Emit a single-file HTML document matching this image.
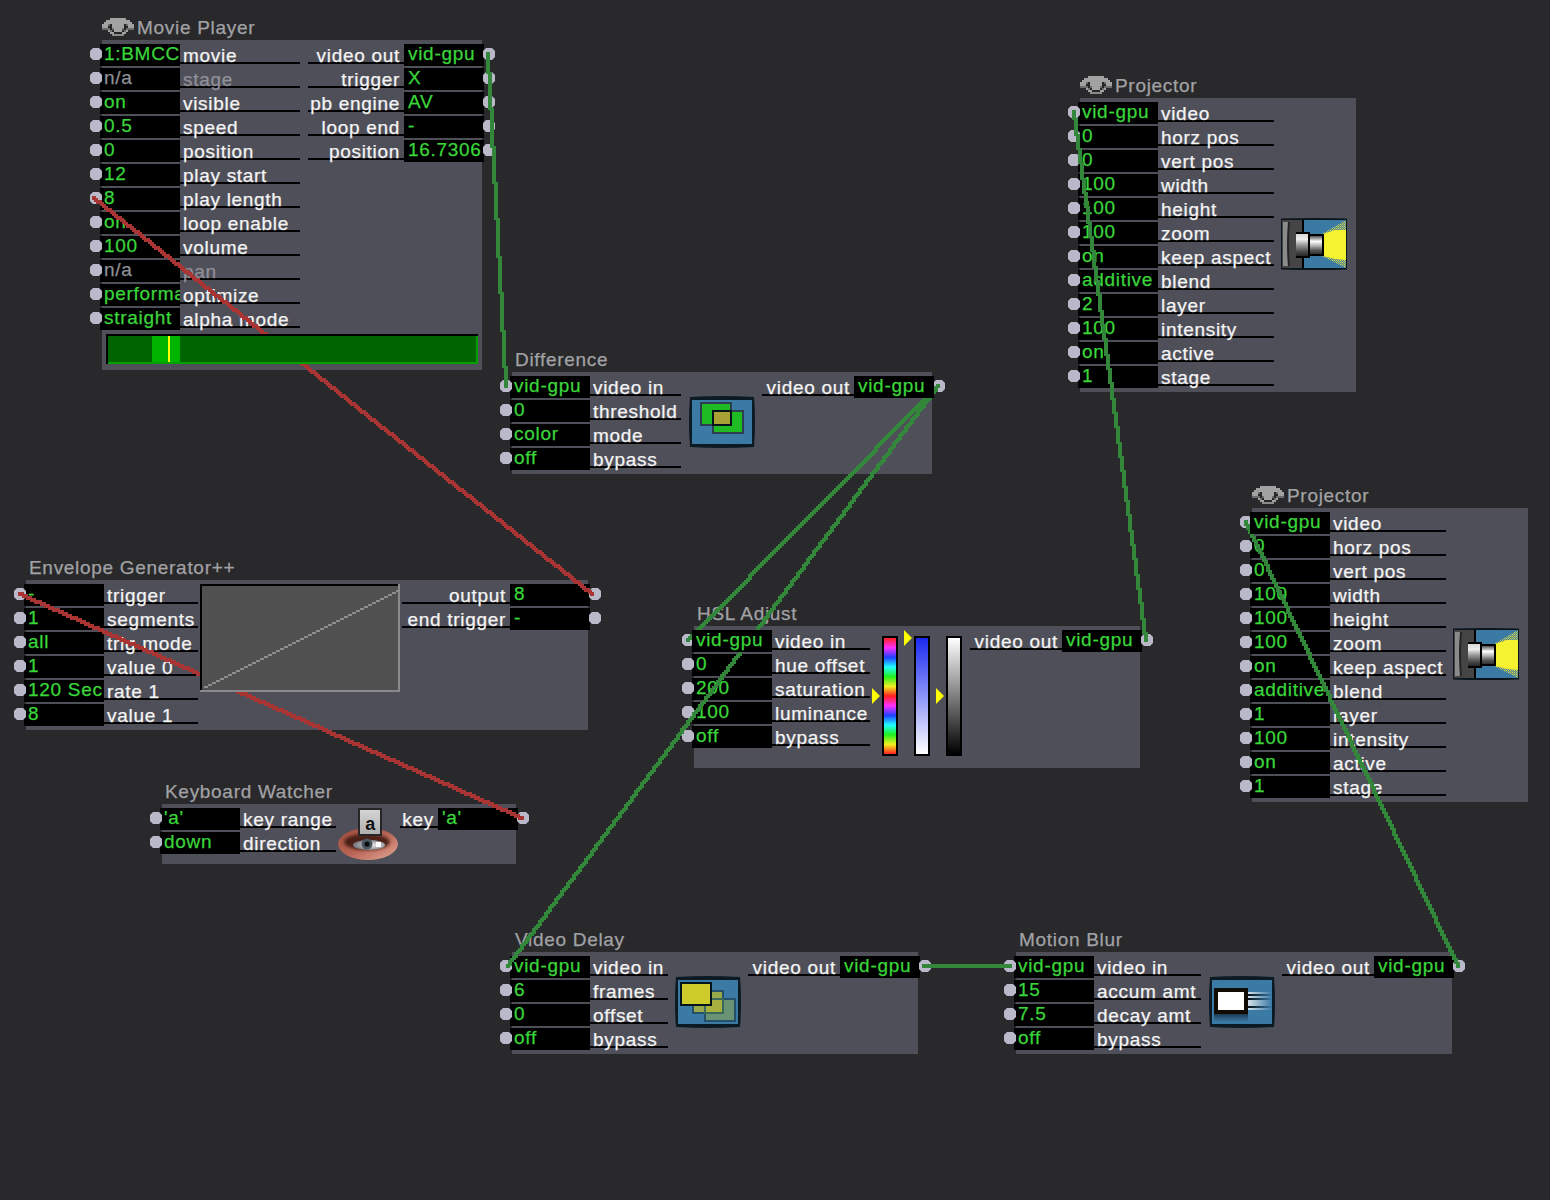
<!DOCTYPE html>
<html><head><meta charset="utf-8"><style>
html,body{margin:0;padding:0}
body{width:1550px;height:1200px;background:#29292b;position:relative;overflow:hidden;font-family:"Liberation Sans",sans-serif;font-size:19px;letter-spacing:0.7px;-webkit-text-stroke:0.25px currentColor}
.t{position:absolute;white-space:nowrap;line-height:22px;height:22px}
.f{position:absolute;background:#000;height:22px;overflow:hidden}
.v{position:absolute;left:4px;top:-1px;white-space:nowrap;line-height:22px}
.p{position:absolute;width:12px;height:12px;background:#b9b9c9;clip-path:polygon(3px 0,9px 0,12px 3px,12px 9px,9px 12px,3px 12px,0 9px,0 3px)}
svg{display:block}
</style></head><body>

<div style="position:absolute;left:102px;top:18px;width:32px;height:18px"><svg width="32" height="18" viewBox="0 0 32 18" shape-rendering="crispEdges"><rect x="8" y="0" width="16" height="2" fill="#a2a2a2"/><rect x="4" y="2" width="24" height="2" fill="#a2a2a2"/><rect x="2" y="4" width="28" height="2" fill="#a2a2a2"/><rect x="0" y="6" width="32" height="2" fill="#a2a2a2"/><rect x="6" y="6" width="2" height="2" fill="#6c6c6c"/><rect x="8" y="6" width="2" height="2" fill="#262626"/><rect x="22" y="6" width="2" height="2" fill="#262626"/><rect x="24" y="6" width="2" height="2" fill="#6c6c6c"/><rect x="0" y="8" width="32" height="2" fill="#a2a2a2"/><rect x="6" y="8" width="4" height="2" fill="#262626"/><rect x="22" y="8" width="4" height="2" fill="#262626"/><rect x="0" y="10" width="32" height="2" fill="#6c6c6c"/><rect x="8" y="10" width="2" height="2" fill="#262626"/><rect x="12" y="10" width="8" height="2" fill="#a2a2a2"/><rect x="22" y="10" width="2" height="2" fill="#262626"/><rect x="6" y="12" width="20" height="2" fill="#a2a2a2"/><rect x="8" y="12" width="2" height="2" fill="#6c6c6c"/><rect x="10" y="12" width="2" height="2" fill="#262626"/><rect x="20" y="12" width="2" height="2" fill="#262626"/><rect x="22" y="12" width="2" height="2" fill="#6c6c6c"/><rect x="8" y="14" width="16" height="2" fill="#a2a2a2"/><rect x="12" y="14" width="8" height="2" fill="#262626"/><rect x="10" y="16" width="12" height="2" fill="#8a8a8a"/></svg></div>
<div class="t" style="left:137px;top:17px;color:#a2a2a6;">Movie Player</div>
<div style="position:absolute;left:102px;top:40px;width:380px;height:330px;background:#4f4f59;"></div>
<div style="position:absolute;left:180px;top:62px;width:120px;height:2px;background:#000;"></div>
<div class="f" style="left:100px;top:44px;width:80px"><div class="v" style="color:#3ad63a">1:BMCC2</div></div>
<div class="t" style="left:183px;top:45px;color:#f4f4f4;">movie</div>
<div class="p" style="left:90px;top:48px"></div>
<div style="position:absolute;left:180px;top:86px;width:120px;height:2px;background:#000;"></div>
<div class="f" style="left:100px;top:68px;width:80px"><div class="v" style="color:#909098">n/a</div></div>
<div class="t" style="left:183px;top:69px;color:#909098;">stage</div>
<div class="p" style="left:90px;top:72px"></div>
<div style="position:absolute;left:180px;top:110px;width:120px;height:2px;background:#000;"></div>
<div class="f" style="left:100px;top:92px;width:80px"><div class="v" style="color:#3ad63a">on</div></div>
<div class="t" style="left:183px;top:93px;color:#f4f4f4;">visible</div>
<div class="p" style="left:90px;top:96px"></div>
<div style="position:absolute;left:180px;top:134px;width:120px;height:2px;background:#000;"></div>
<div class="f" style="left:100px;top:116px;width:80px"><div class="v" style="color:#3ad63a">0.5</div></div>
<div class="t" style="left:183px;top:117px;color:#f4f4f4;">speed</div>
<div class="p" style="left:90px;top:120px"></div>
<div style="position:absolute;left:180px;top:158px;width:120px;height:2px;background:#000;"></div>
<div class="f" style="left:100px;top:140px;width:80px"><div class="v" style="color:#3ad63a">0</div></div>
<div class="t" style="left:183px;top:141px;color:#f4f4f4;">position</div>
<div class="p" style="left:90px;top:144px"></div>
<div style="position:absolute;left:180px;top:182px;width:120px;height:2px;background:#000;"></div>
<div class="f" style="left:100px;top:164px;width:80px"><div class="v" style="color:#3ad63a">12</div></div>
<div class="t" style="left:183px;top:165px;color:#f4f4f4;">play start</div>
<div class="p" style="left:90px;top:168px"></div>
<div style="position:absolute;left:180px;top:206px;width:120px;height:2px;background:#000;"></div>
<div class="f" style="left:100px;top:188px;width:80px"><div class="v" style="color:#3ad63a">8</div></div>
<div class="t" style="left:183px;top:189px;color:#f4f4f4;">play length</div>
<div class="p" style="left:90px;top:192px"></div>
<div style="position:absolute;left:180px;top:230px;width:120px;height:2px;background:#000;"></div>
<div class="f" style="left:100px;top:212px;width:80px"><div class="v" style="color:#3ad63a">on</div></div>
<div class="t" style="left:183px;top:213px;color:#f4f4f4;">loop enable</div>
<div class="p" style="left:90px;top:216px"></div>
<div style="position:absolute;left:180px;top:254px;width:120px;height:2px;background:#000;"></div>
<div class="f" style="left:100px;top:236px;width:80px"><div class="v" style="color:#3ad63a">100</div></div>
<div class="t" style="left:183px;top:237px;color:#f4f4f4;">volume</div>
<div class="p" style="left:90px;top:240px"></div>
<div style="position:absolute;left:180px;top:278px;width:120px;height:2px;background:#000;"></div>
<div class="f" style="left:100px;top:260px;width:80px"><div class="v" style="color:#909098">n/a</div></div>
<div class="t" style="left:183px;top:261px;color:#909098;">pan</div>
<div class="p" style="left:90px;top:264px"></div>
<div style="position:absolute;left:180px;top:302px;width:120px;height:2px;background:#000;"></div>
<div class="f" style="left:100px;top:284px;width:80px"><div class="v" style="color:#3ad63a">performance</div></div>
<div class="t" style="left:183px;top:285px;color:#f4f4f4;">optimize</div>
<div class="p" style="left:90px;top:288px"></div>
<div style="position:absolute;left:180px;top:326px;width:120px;height:2px;background:#000;"></div>
<div class="f" style="left:100px;top:308px;width:80px"><div class="v" style="color:#3ad63a">straight</div></div>
<div class="t" style="left:183px;top:309px;color:#f4f4f4;">alpha mode</div>
<div class="p" style="left:90px;top:312px"></div>
<div style="position:absolute;left:308px;top:62px;width:96px;height:2px;background:#000;"></div>
<div class="f" style="left:404px;top:44px;width:80px"><div class="v" style="color:#3ad63a">vid-gpu</div></div>
<div class="t" style="right:1150px;top:45px;color:#f4f4f4;text-align:right;">video out</div>
<div class="p" style="left:483px;top:48px"></div>
<div style="position:absolute;left:308px;top:86px;width:96px;height:2px;background:#000;"></div>
<div class="f" style="left:404px;top:68px;width:80px"><div class="v" style="color:#3ad63a">X</div></div>
<div class="t" style="right:1150px;top:69px;color:#f4f4f4;text-align:right;">trigger</div>
<div class="p" style="left:483px;top:72px"></div>
<div style="position:absolute;left:308px;top:110px;width:96px;height:2px;background:#000;"></div>
<div class="f" style="left:404px;top:92px;width:80px"><div class="v" style="color:#3ad63a">AV</div></div>
<div class="t" style="right:1150px;top:93px;color:#f4f4f4;text-align:right;">pb engine</div>
<div class="p" style="left:483px;top:96px"></div>
<div style="position:absolute;left:308px;top:134px;width:96px;height:2px;background:#000;"></div>
<div class="f" style="left:404px;top:116px;width:80px"><div class="v" style="color:#3ad63a">-</div></div>
<div class="t" style="right:1150px;top:117px;color:#f4f4f4;text-align:right;">loop end</div>
<div class="p" style="left:483px;top:120px"></div>
<div style="position:absolute;left:308px;top:158px;width:96px;height:2px;background:#000;"></div>
<div class="f" style="left:404px;top:140px;width:80px"><div class="v" style="color:#3ad63a">16.7306</div></div>
<div class="t" style="right:1150px;top:141px;color:#f4f4f4;text-align:right;">position</div>
<div class="p" style="left:483px;top:144px"></div>
<div class="t" style="left:515px;top:349px;color:#a2a2a6;">Difference</div>
<div style="position:absolute;left:512px;top:372px;width:420px;height:102px;background:#4f4f59;"></div>
<div style="position:absolute;left:590px;top:394px;width:91px;height:2px;background:#000;"></div>
<div class="f" style="left:510px;top:376px;width:80px"><div class="v" style="color:#3ad63a">vid-gpu</div></div>
<div class="t" style="left:593px;top:377px;color:#f4f4f4;">video in</div>
<div class="p" style="left:500px;top:380px"></div>
<div style="position:absolute;left:590px;top:418px;width:91px;height:2px;background:#000;"></div>
<div class="f" style="left:510px;top:400px;width:80px"><div class="v" style="color:#3ad63a">0</div></div>
<div class="t" style="left:593px;top:401px;color:#f4f4f4;">threshold</div>
<div class="p" style="left:500px;top:404px"></div>
<div style="position:absolute;left:590px;top:442px;width:91px;height:2px;background:#000;"></div>
<div class="f" style="left:510px;top:424px;width:80px"><div class="v" style="color:#3ad63a">color</div></div>
<div class="t" style="left:593px;top:425px;color:#f4f4f4;">mode</div>
<div class="p" style="left:500px;top:428px"></div>
<div style="position:absolute;left:590px;top:466px;width:91px;height:2px;background:#000;"></div>
<div class="f" style="left:510px;top:448px;width:80px"><div class="v" style="color:#3ad63a">off</div></div>
<div class="t" style="left:593px;top:449px;color:#f4f4f4;">bypass</div>
<div class="p" style="left:500px;top:452px"></div>
<div style="position:absolute;left:762px;top:394px;width:92px;height:2px;background:#000;"></div>
<div class="f" style="left:854px;top:376px;width:80px"><div class="v" style="color:#3ad63a">vid-gpu</div></div>
<div class="t" style="right:700px;top:377px;color:#f4f4f4;text-align:right;">video out</div>
<div class="p" style="left:933px;top:380px"></div>
<div style="position:absolute;left:1080px;top:76px;width:32px;height:18px"><svg width="32" height="18" viewBox="0 0 32 18" shape-rendering="crispEdges"><rect x="8" y="0" width="16" height="2" fill="#a2a2a2"/><rect x="4" y="2" width="24" height="2" fill="#a2a2a2"/><rect x="2" y="4" width="28" height="2" fill="#a2a2a2"/><rect x="0" y="6" width="32" height="2" fill="#a2a2a2"/><rect x="6" y="6" width="2" height="2" fill="#6c6c6c"/><rect x="8" y="6" width="2" height="2" fill="#262626"/><rect x="22" y="6" width="2" height="2" fill="#262626"/><rect x="24" y="6" width="2" height="2" fill="#6c6c6c"/><rect x="0" y="8" width="32" height="2" fill="#a2a2a2"/><rect x="6" y="8" width="4" height="2" fill="#262626"/><rect x="22" y="8" width="4" height="2" fill="#262626"/><rect x="0" y="10" width="32" height="2" fill="#6c6c6c"/><rect x="8" y="10" width="2" height="2" fill="#262626"/><rect x="12" y="10" width="8" height="2" fill="#a2a2a2"/><rect x="22" y="10" width="2" height="2" fill="#262626"/><rect x="6" y="12" width="20" height="2" fill="#a2a2a2"/><rect x="8" y="12" width="2" height="2" fill="#6c6c6c"/><rect x="10" y="12" width="2" height="2" fill="#262626"/><rect x="20" y="12" width="2" height="2" fill="#262626"/><rect x="22" y="12" width="2" height="2" fill="#6c6c6c"/><rect x="8" y="14" width="16" height="2" fill="#a2a2a2"/><rect x="12" y="14" width="8" height="2" fill="#262626"/><rect x="10" y="16" width="12" height="2" fill="#8a8a8a"/></svg></div>
<div class="t" style="left:1115px;top:75px;color:#a2a2a6;">Projector</div>
<div style="position:absolute;left:1080px;top:98px;width:276px;height:294px;background:#4f4f59;"></div>
<div style="position:absolute;left:1158px;top:120px;width:116px;height:2px;background:#000;"></div>
<div class="f" style="left:1078px;top:102px;width:80px"><div class="v" style="color:#3ad63a">vid-gpu</div></div>
<div class="t" style="left:1161px;top:103px;color:#f4f4f4;">video</div>
<div class="p" style="left:1068px;top:106px"></div>
<div style="position:absolute;left:1158px;top:144px;width:116px;height:2px;background:#000;"></div>
<div class="f" style="left:1078px;top:126px;width:80px"><div class="v" style="color:#3ad63a">0</div></div>
<div class="t" style="left:1161px;top:127px;color:#f4f4f4;">horz pos</div>
<div class="p" style="left:1068px;top:130px"></div>
<div style="position:absolute;left:1158px;top:168px;width:116px;height:2px;background:#000;"></div>
<div class="f" style="left:1078px;top:150px;width:80px"><div class="v" style="color:#3ad63a">0</div></div>
<div class="t" style="left:1161px;top:151px;color:#f4f4f4;">vert pos</div>
<div class="p" style="left:1068px;top:154px"></div>
<div style="position:absolute;left:1158px;top:192px;width:116px;height:2px;background:#000;"></div>
<div class="f" style="left:1078px;top:174px;width:80px"><div class="v" style="color:#3ad63a">100</div></div>
<div class="t" style="left:1161px;top:175px;color:#f4f4f4;">width</div>
<div class="p" style="left:1068px;top:178px"></div>
<div style="position:absolute;left:1158px;top:216px;width:116px;height:2px;background:#000;"></div>
<div class="f" style="left:1078px;top:198px;width:80px"><div class="v" style="color:#3ad63a">100</div></div>
<div class="t" style="left:1161px;top:199px;color:#f4f4f4;">height</div>
<div class="p" style="left:1068px;top:202px"></div>
<div style="position:absolute;left:1158px;top:240px;width:116px;height:2px;background:#000;"></div>
<div class="f" style="left:1078px;top:222px;width:80px"><div class="v" style="color:#3ad63a">100</div></div>
<div class="t" style="left:1161px;top:223px;color:#f4f4f4;">zoom</div>
<div class="p" style="left:1068px;top:226px"></div>
<div style="position:absolute;left:1158px;top:264px;width:116px;height:2px;background:#000;"></div>
<div class="f" style="left:1078px;top:246px;width:80px"><div class="v" style="color:#3ad63a">on</div></div>
<div class="t" style="left:1161px;top:247px;color:#f4f4f4;">keep aspect</div>
<div class="p" style="left:1068px;top:250px"></div>
<div style="position:absolute;left:1158px;top:288px;width:116px;height:2px;background:#000;"></div>
<div class="f" style="left:1078px;top:270px;width:80px"><div class="v" style="color:#3ad63a">additive</div></div>
<div class="t" style="left:1161px;top:271px;color:#f4f4f4;">blend</div>
<div class="p" style="left:1068px;top:274px"></div>
<div style="position:absolute;left:1158px;top:312px;width:116px;height:2px;background:#000;"></div>
<div class="f" style="left:1078px;top:294px;width:80px"><div class="v" style="color:#3ad63a">2</div></div>
<div class="t" style="left:1161px;top:295px;color:#f4f4f4;">layer</div>
<div class="p" style="left:1068px;top:298px"></div>
<div style="position:absolute;left:1158px;top:336px;width:116px;height:2px;background:#000;"></div>
<div class="f" style="left:1078px;top:318px;width:80px"><div class="v" style="color:#3ad63a">100</div></div>
<div class="t" style="left:1161px;top:319px;color:#f4f4f4;">intensity</div>
<div class="p" style="left:1068px;top:322px"></div>
<div style="position:absolute;left:1158px;top:360px;width:116px;height:2px;background:#000;"></div>
<div class="f" style="left:1078px;top:342px;width:80px"><div class="v" style="color:#3ad63a">on</div></div>
<div class="t" style="left:1161px;top:343px;color:#f4f4f4;">active</div>
<div class="p" style="left:1068px;top:346px"></div>
<div style="position:absolute;left:1158px;top:384px;width:116px;height:2px;background:#000;"></div>
<div class="f" style="left:1078px;top:366px;width:80px"><div class="v" style="color:#3ad63a">1</div></div>
<div class="t" style="left:1161px;top:367px;color:#f4f4f4;">stage</div>
<div class="p" style="left:1068px;top:370px"></div>
<div style="position:absolute;left:1280px;top:218px;width:68px;height:52px"><svg width="68" height="52" viewBox="0 0 68 52">
<defs>
<linearGradient id="lens1_0" x1="0" x2="0" y1="0" y2="1"><stop offset="0" stop-color="#d8d8d8"/><stop offset="0.25" stop-color="#ececec"/><stop offset="0.5" stop-color="#9a9a9a"/><stop offset="0.8" stop-color="#4a4a4a"/><stop offset="1" stop-color="#262626"/></linearGradient>
<linearGradient id="lens2_0" x1="0" x2="0" y1="0" y2="1"><stop offset="0" stop-color="#505050"/><stop offset="0.3" stop-color="#ffffff"/><stop offset="0.55" stop-color="#b0b0b0"/><stop offset="0.8" stop-color="#555555"/><stop offset="1" stop-color="#303030"/></linearGradient>
<pattern id="dith_0" width="2" height="2" patternUnits="userSpaceOnUse"><rect width="2" height="2" fill="#3c7aa6"/><rect width="1" height="1" fill="#e8e840"/><rect x="1" y="1" width="1" height="1" fill="#b8c050"/></pattern>
</defs>
<path d="M1 0.5 Q34 -0.5 67 0.5 L67 51.5 Q34 52.5 1 51.5z" fill="#0a141c"/>
<rect x="2" y="2" width="21" height="48" fill="#454545"/>
<rect x="3" y="4" width="5" height="44" fill="#8a8a8a"/>
<path d="M8 4 Q6 26 8 48 L10 48 Q8 26 10 4z" fill="#242424"/>
<rect x="22" y="2" width="2" height="48" fill="#000"/>
<rect x="24" y="2" width="42" height="48" fill="#3c7aa6"/>
<path d="M42 16 L66 2 L66 50 L42 38z" fill="url(#dith_0)"/>
<path d="M43 16 L55 12 L66 12 L66 42 L55 41 L43 38z" fill="#f5f230"/>
<rect x="16" y="14" width="14" height="26" fill="#000"/>
<rect x="16" y="16" width="12" height="22" fill="url(#lens1_0)"/>
<rect x="30" y="16" width="14" height="22" fill="#000"/>
<rect x="30" y="18" width="12" height="18" fill="url(#lens2_0)"/>
</svg></div>
<div style="position:absolute;left:1252px;top:486px;width:32px;height:18px"><svg width="32" height="18" viewBox="0 0 32 18" shape-rendering="crispEdges"><rect x="8" y="0" width="16" height="2" fill="#a2a2a2"/><rect x="4" y="2" width="24" height="2" fill="#a2a2a2"/><rect x="2" y="4" width="28" height="2" fill="#a2a2a2"/><rect x="0" y="6" width="32" height="2" fill="#a2a2a2"/><rect x="6" y="6" width="2" height="2" fill="#6c6c6c"/><rect x="8" y="6" width="2" height="2" fill="#262626"/><rect x="22" y="6" width="2" height="2" fill="#262626"/><rect x="24" y="6" width="2" height="2" fill="#6c6c6c"/><rect x="0" y="8" width="32" height="2" fill="#a2a2a2"/><rect x="6" y="8" width="4" height="2" fill="#262626"/><rect x="22" y="8" width="4" height="2" fill="#262626"/><rect x="0" y="10" width="32" height="2" fill="#6c6c6c"/><rect x="8" y="10" width="2" height="2" fill="#262626"/><rect x="12" y="10" width="8" height="2" fill="#a2a2a2"/><rect x="22" y="10" width="2" height="2" fill="#262626"/><rect x="6" y="12" width="20" height="2" fill="#a2a2a2"/><rect x="8" y="12" width="2" height="2" fill="#6c6c6c"/><rect x="10" y="12" width="2" height="2" fill="#262626"/><rect x="20" y="12" width="2" height="2" fill="#262626"/><rect x="22" y="12" width="2" height="2" fill="#6c6c6c"/><rect x="8" y="14" width="16" height="2" fill="#a2a2a2"/><rect x="12" y="14" width="8" height="2" fill="#262626"/><rect x="10" y="16" width="12" height="2" fill="#8a8a8a"/></svg></div>
<div class="t" style="left:1287px;top:485px;color:#a2a2a6;">Projector</div>
<div style="position:absolute;left:1252px;top:508px;width:276px;height:294px;background:#4f4f59;"></div>
<div style="position:absolute;left:1330px;top:530px;width:116px;height:2px;background:#000;"></div>
<div class="f" style="left:1250px;top:512px;width:80px"><div class="v" style="color:#3ad63a">vid-gpu</div></div>
<div class="t" style="left:1333px;top:513px;color:#f4f4f4;">video</div>
<div class="p" style="left:1240px;top:516px"></div>
<div style="position:absolute;left:1330px;top:554px;width:116px;height:2px;background:#000;"></div>
<div class="f" style="left:1250px;top:536px;width:80px"><div class="v" style="color:#3ad63a">0</div></div>
<div class="t" style="left:1333px;top:537px;color:#f4f4f4;">horz pos</div>
<div class="p" style="left:1240px;top:540px"></div>
<div style="position:absolute;left:1330px;top:578px;width:116px;height:2px;background:#000;"></div>
<div class="f" style="left:1250px;top:560px;width:80px"><div class="v" style="color:#3ad63a">0</div></div>
<div class="t" style="left:1333px;top:561px;color:#f4f4f4;">vert pos</div>
<div class="p" style="left:1240px;top:564px"></div>
<div style="position:absolute;left:1330px;top:602px;width:116px;height:2px;background:#000;"></div>
<div class="f" style="left:1250px;top:584px;width:80px"><div class="v" style="color:#3ad63a">100</div></div>
<div class="t" style="left:1333px;top:585px;color:#f4f4f4;">width</div>
<div class="p" style="left:1240px;top:588px"></div>
<div style="position:absolute;left:1330px;top:626px;width:116px;height:2px;background:#000;"></div>
<div class="f" style="left:1250px;top:608px;width:80px"><div class="v" style="color:#3ad63a">100</div></div>
<div class="t" style="left:1333px;top:609px;color:#f4f4f4;">height</div>
<div class="p" style="left:1240px;top:612px"></div>
<div style="position:absolute;left:1330px;top:650px;width:116px;height:2px;background:#000;"></div>
<div class="f" style="left:1250px;top:632px;width:80px"><div class="v" style="color:#3ad63a">100</div></div>
<div class="t" style="left:1333px;top:633px;color:#f4f4f4;">zoom</div>
<div class="p" style="left:1240px;top:636px"></div>
<div style="position:absolute;left:1330px;top:674px;width:116px;height:2px;background:#000;"></div>
<div class="f" style="left:1250px;top:656px;width:80px"><div class="v" style="color:#3ad63a">on</div></div>
<div class="t" style="left:1333px;top:657px;color:#f4f4f4;">keep aspect</div>
<div class="p" style="left:1240px;top:660px"></div>
<div style="position:absolute;left:1330px;top:698px;width:116px;height:2px;background:#000;"></div>
<div class="f" style="left:1250px;top:680px;width:80px"><div class="v" style="color:#3ad63a">additive</div></div>
<div class="t" style="left:1333px;top:681px;color:#f4f4f4;">blend</div>
<div class="p" style="left:1240px;top:684px"></div>
<div style="position:absolute;left:1330px;top:722px;width:116px;height:2px;background:#000;"></div>
<div class="f" style="left:1250px;top:704px;width:80px"><div class="v" style="color:#3ad63a">1</div></div>
<div class="t" style="left:1333px;top:705px;color:#f4f4f4;">layer</div>
<div class="p" style="left:1240px;top:708px"></div>
<div style="position:absolute;left:1330px;top:746px;width:116px;height:2px;background:#000;"></div>
<div class="f" style="left:1250px;top:728px;width:80px"><div class="v" style="color:#3ad63a">100</div></div>
<div class="t" style="left:1333px;top:729px;color:#f4f4f4;">intensity</div>
<div class="p" style="left:1240px;top:732px"></div>
<div style="position:absolute;left:1330px;top:770px;width:116px;height:2px;background:#000;"></div>
<div class="f" style="left:1250px;top:752px;width:80px"><div class="v" style="color:#3ad63a">on</div></div>
<div class="t" style="left:1333px;top:753px;color:#f4f4f4;">active</div>
<div class="p" style="left:1240px;top:756px"></div>
<div style="position:absolute;left:1330px;top:794px;width:116px;height:2px;background:#000;"></div>
<div class="f" style="left:1250px;top:776px;width:80px"><div class="v" style="color:#3ad63a">1</div></div>
<div class="t" style="left:1333px;top:777px;color:#f4f4f4;">stage</div>
<div class="p" style="left:1240px;top:780px"></div>
<div style="position:absolute;left:1452px;top:628px;width:68px;height:52px"><svg width="68" height="52" viewBox="0 0 68 52">
<defs>
<linearGradient id="lens1_1" x1="0" x2="0" y1="0" y2="1"><stop offset="0" stop-color="#d8d8d8"/><stop offset="0.25" stop-color="#ececec"/><stop offset="0.5" stop-color="#9a9a9a"/><stop offset="0.8" stop-color="#4a4a4a"/><stop offset="1" stop-color="#262626"/></linearGradient>
<linearGradient id="lens2_1" x1="0" x2="0" y1="0" y2="1"><stop offset="0" stop-color="#505050"/><stop offset="0.3" stop-color="#ffffff"/><stop offset="0.55" stop-color="#b0b0b0"/><stop offset="0.8" stop-color="#555555"/><stop offset="1" stop-color="#303030"/></linearGradient>
<pattern id="dith_1" width="2" height="2" patternUnits="userSpaceOnUse"><rect width="2" height="2" fill="#3c7aa6"/><rect width="1" height="1" fill="#e8e840"/><rect x="1" y="1" width="1" height="1" fill="#b8c050"/></pattern>
</defs>
<path d="M1 0.5 Q34 -0.5 67 0.5 L67 51.5 Q34 52.5 1 51.5z" fill="#0a141c"/>
<rect x="2" y="2" width="21" height="48" fill="#454545"/>
<rect x="3" y="4" width="5" height="44" fill="#8a8a8a"/>
<path d="M8 4 Q6 26 8 48 L10 48 Q8 26 10 4z" fill="#242424"/>
<rect x="22" y="2" width="2" height="48" fill="#000"/>
<rect x="24" y="2" width="42" height="48" fill="#3c7aa6"/>
<path d="M42 16 L66 2 L66 50 L42 38z" fill="url(#dith_1)"/>
<path d="M43 16 L55 12 L66 12 L66 42 L55 41 L43 38z" fill="#f5f230"/>
<rect x="16" y="14" width="14" height="26" fill="#000"/>
<rect x="16" y="16" width="12" height="22" fill="url(#lens1_1)"/>
<rect x="30" y="16" width="14" height="22" fill="#000"/>
<rect x="30" y="18" width="12" height="18" fill="url(#lens2_1)"/>
</svg></div>
<div class="t" style="left:29px;top:557px;color:#a2a2a6;">Envelope Generator++</div>
<div style="position:absolute;left:26px;top:580px;width:562px;height:150px;background:#4f4f59;"></div>
<div style="position:absolute;left:104px;top:602px;width:94px;height:2px;background:#000;"></div>
<div class="f" style="left:24px;top:584px;width:80px"><div class="v" style="color:#3ad63a">-</div></div>
<div class="t" style="left:107px;top:585px;color:#f4f4f4;">trigger</div>
<div class="p" style="left:14px;top:588px"></div>
<div style="position:absolute;left:104px;top:626px;width:94px;height:2px;background:#000;"></div>
<div class="f" style="left:24px;top:608px;width:80px"><div class="v" style="color:#3ad63a">1</div></div>
<div class="t" style="left:107px;top:609px;color:#f4f4f4;">segments</div>
<div class="p" style="left:14px;top:612px"></div>
<div style="position:absolute;left:104px;top:650px;width:94px;height:2px;background:#000;"></div>
<div class="f" style="left:24px;top:632px;width:80px"><div class="v" style="color:#3ad63a">all</div></div>
<div class="t" style="left:107px;top:633px;color:#f4f4f4;">trig mode</div>
<div class="p" style="left:14px;top:636px"></div>
<div style="position:absolute;left:104px;top:674px;width:94px;height:2px;background:#000;"></div>
<div class="f" style="left:24px;top:656px;width:80px"><div class="v" style="color:#3ad63a">1</div></div>
<div class="t" style="left:107px;top:657px;color:#f4f4f4;">value 0</div>
<div class="p" style="left:14px;top:660px"></div>
<div style="position:absolute;left:104px;top:698px;width:94px;height:2px;background:#000;"></div>
<div class="f" style="left:24px;top:680px;width:80px"><div class="v" style="color:#3ad63a">120 Sec</div></div>
<div class="t" style="left:107px;top:681px;color:#f4f4f4;">rate 1</div>
<div class="p" style="left:14px;top:684px"></div>
<div style="position:absolute;left:104px;top:722px;width:94px;height:2px;background:#000;"></div>
<div class="f" style="left:24px;top:704px;width:80px"><div class="v" style="color:#3ad63a">8</div></div>
<div class="t" style="left:107px;top:705px;color:#f4f4f4;">value 1</div>
<div class="p" style="left:14px;top:708px"></div>
<div style="position:absolute;left:402px;top:602px;width:108px;height:2px;background:#000;"></div>
<div class="f" style="left:510px;top:584px;width:80px"><div class="v" style="color:#3ad63a">8</div></div>
<div class="t" style="right:1044px;top:585px;color:#f4f4f4;text-align:right;">output</div>
<div class="p" style="left:589px;top:588px"></div>
<div style="position:absolute;left:402px;top:626px;width:108px;height:2px;background:#000;"></div>
<div class="f" style="left:510px;top:608px;width:80px"><div class="v" style="color:#3ad63a">-</div></div>
<div class="t" style="right:1044px;top:609px;color:#f4f4f4;text-align:right;">end trigger</div>
<div class="p" style="left:589px;top:612px"></div>
<div class="t" style="left:697px;top:603px;color:#a2a2a6;">HSL Adjust</div>
<div style="position:absolute;left:694px;top:626px;width:446px;height:142px;background:#4f4f59;"></div>
<div style="position:absolute;left:772px;top:648px;width:98px;height:2px;background:#000;"></div>
<div class="f" style="left:692px;top:630px;width:80px"><div class="v" style="color:#3ad63a">vid-gpu</div></div>
<div class="t" style="left:775px;top:631px;color:#f4f4f4;">video in</div>
<div class="p" style="left:682px;top:634px"></div>
<div style="position:absolute;left:772px;top:672px;width:98px;height:2px;background:#000;"></div>
<div class="f" style="left:692px;top:654px;width:80px"><div class="v" style="color:#3ad63a">0</div></div>
<div class="t" style="left:775px;top:655px;color:#f4f4f4;">hue offset</div>
<div class="p" style="left:682px;top:658px"></div>
<div style="position:absolute;left:772px;top:696px;width:98px;height:2px;background:#000;"></div>
<div class="f" style="left:692px;top:678px;width:80px"><div class="v" style="color:#3ad63a">200</div></div>
<div class="t" style="left:775px;top:679px;color:#f4f4f4;">saturation</div>
<div class="p" style="left:682px;top:682px"></div>
<div style="position:absolute;left:772px;top:720px;width:98px;height:2px;background:#000;"></div>
<div class="f" style="left:692px;top:702px;width:80px"><div class="v" style="color:#3ad63a">100</div></div>
<div class="t" style="left:775px;top:703px;color:#f4f4f4;">luminance</div>
<div class="p" style="left:682px;top:706px"></div>
<div style="position:absolute;left:772px;top:744px;width:98px;height:2px;background:#000;"></div>
<div class="f" style="left:692px;top:726px;width:80px"><div class="v" style="color:#3ad63a">off</div></div>
<div class="t" style="left:775px;top:727px;color:#f4f4f4;">bypass</div>
<div class="p" style="left:682px;top:730px"></div>
<div style="position:absolute;left:970px;top:648px;width:92px;height:2px;background:#000;"></div>
<div class="f" style="left:1062px;top:630px;width:80px"><div class="v" style="color:#3ad63a">vid-gpu</div></div>
<div class="t" style="right:492px;top:631px;color:#f4f4f4;text-align:right;">video out</div>
<div class="p" style="left:1141px;top:634px"></div>
<svg style="position:absolute;left:860px;top:620px" width="110" height="145">
<defs><linearGradient id="hue" x1="0" x2="0" y1="0" y2="1"><stop offset="0.000" stop-color="#ff2020"/><stop offset="0.083" stop-color="#ff30ff"/><stop offset="0.167" stop-color="#2040ff"/><stop offset="0.250" stop-color="#20ffff"/><stop offset="0.333" stop-color="#20f020"/><stop offset="0.417" stop-color="#f0f020"/><stop offset="0.500" stop-color="#ff2020"/><stop offset="0.583" stop-color="#ff30ff"/><stop offset="0.667" stop-color="#2040ff"/><stop offset="0.750" stop-color="#20ffff"/><stop offset="0.833" stop-color="#20f020"/><stop offset="0.917" stop-color="#f0f020"/><stop offset="1.000" stop-color="#ff2020"/></linearGradient>
<linearGradient id="sat" x1="0" x2="0" y1="0" y2="1"><stop offset="0" stop-color="#1a2af0"/><stop offset="1" stop-color="#ffffff"/></linearGradient>
<linearGradient id="lum" x1="0" x2="0" y1="0" y2="1"><stop offset="0" stop-color="#ffffff"/><stop offset="1" stop-color="#000000"/></linearGradient></defs>
<rect x="22" y="16" width="16" height="120" fill="#000"/><rect x="24" y="18" width="12" height="116" fill="url(#hue)"/>
<rect x="54" y="16" width="16" height="120" fill="#000"/><rect x="56" y="18" width="12" height="116" fill="url(#sat)"/>
<rect x="86" y="16" width="16" height="120" fill="#000"/><rect x="88" y="18" width="12" height="116" fill="url(#lum)"/>
<path d="M44 10 L52 18 L44 26z" fill="#ffff00"/>
<path d="M12 68 L20 76 L12 84z" fill="#ffff00"/>
<path d="M76 68 L84 76 L76 84z" fill="#ffff00"/>
</svg>
<div class="t" style="left:165px;top:781px;color:#a2a2a6;">Keyboard Watcher</div>
<div style="position:absolute;left:162px;top:804px;width:354px;height:60px;background:#4f4f59;"></div>
<div style="position:absolute;left:240px;top:826px;width:96px;height:2px;background:#000;"></div>
<div class="f" style="left:160px;top:808px;width:80px"><div class="v" style="color:#3ad63a">'a'</div></div>
<div class="t" style="left:243px;top:809px;color:#f4f4f4;">key range</div>
<div class="p" style="left:150px;top:812px"></div>
<div style="position:absolute;left:240px;top:850px;width:96px;height:2px;background:#000;"></div>
<div class="f" style="left:160px;top:832px;width:80px"><div class="v" style="color:#3ad63a">down</div></div>
<div class="t" style="left:243px;top:833px;color:#f4f4f4;">direction</div>
<div class="p" style="left:150px;top:836px"></div>
<div style="position:absolute;left:400px;top:826px;width:38px;height:2px;background:#000;"></div>
<div class="f" style="left:438px;top:808px;width:80px"><div class="v" style="color:#3ad63a">'a'</div></div>
<div class="t" style="right:1116px;top:809px;color:#f4f4f4;text-align:right;">key</div>
<div class="p" style="left:517px;top:812px"></div>
<svg style="position:absolute;left:336px;top:806px" width="64" height="56">
<defs><linearGradient id="skin" x1="0" y1="0" x2="1" y2="1"><stop offset="0" stop-color="#9a4a3c"/><stop offset="0.5" stop-color="#b86454"/><stop offset="1" stop-color="#e4a898"/></linearGradient>
<radialGradient id="ball" cx="0.6" cy="0.5" r="0.55"><stop offset="0" stop-color="#f0f0f2"/><stop offset="1" stop-color="#7a7a80"/></radialGradient>
<linearGradient id="key" x1="0" x2="0" y1="0" y2="1"><stop offset="0" stop-color="#d4d4d4"/><stop offset="1" stop-color="#b0b0b0"/></linearGradient>
<filter id="bl" x="-20%" y="-50%" width="140%" height="200%"><feGaussianBlur stdDeviation="1.6"/></filter></defs>
<ellipse cx="32" cy="38" rx="30" ry="16" fill="url(#skin)"/>
<ellipse cx="31" cy="36" rx="23" ry="8" fill="#3a1210" opacity="0.85" filter="url(#bl)"/>
<ellipse cx="33" cy="39" rx="16" ry="5" fill="url(#ball)"/>
<circle cx="31" cy="38" r="5.5" fill="#4a5660"/>
<circle cx="31" cy="38" r="2.6" fill="#0a0c10"/>
<rect x="40" y="36" width="5" height="5" fill="#ffffff"/>
<rect x="22" y="2" width="24" height="28" fill="#262626"/>
<rect x="24" y="4" width="20" height="24" fill="url(#key)"/>
<text x="34.5" y="24" font-family="Liberation Sans" font-weight="bold" font-size="18" fill="#101010" text-anchor="middle">a</text>
</svg>
<div class="t" style="left:515px;top:929px;color:#a2a2a6;">Video Delay</div>
<div style="position:absolute;left:512px;top:952px;width:406px;height:102px;background:#4f4f59;"></div>
<div style="position:absolute;left:590px;top:974px;width:78px;height:2px;background:#000;"></div>
<div class="f" style="left:510px;top:956px;width:80px"><div class="v" style="color:#3ad63a">vid-gpu</div></div>
<div class="t" style="left:593px;top:957px;color:#f4f4f4;">video in</div>
<div class="p" style="left:500px;top:960px"></div>
<div style="position:absolute;left:590px;top:998px;width:78px;height:2px;background:#000;"></div>
<div class="f" style="left:510px;top:980px;width:80px"><div class="v" style="color:#3ad63a">6</div></div>
<div class="t" style="left:593px;top:981px;color:#f4f4f4;">frames</div>
<div class="p" style="left:500px;top:984px"></div>
<div style="position:absolute;left:590px;top:1022px;width:78px;height:2px;background:#000;"></div>
<div class="f" style="left:510px;top:1004px;width:80px"><div class="v" style="color:#3ad63a">0</div></div>
<div class="t" style="left:593px;top:1005px;color:#f4f4f4;">offset</div>
<div class="p" style="left:500px;top:1008px"></div>
<div style="position:absolute;left:590px;top:1046px;width:78px;height:2px;background:#000;"></div>
<div class="f" style="left:510px;top:1028px;width:80px"><div class="v" style="color:#3ad63a">off</div></div>
<div class="t" style="left:593px;top:1029px;color:#f4f4f4;">bypass</div>
<div class="p" style="left:500px;top:1032px"></div>
<div style="position:absolute;left:748px;top:974px;width:92px;height:2px;background:#000;"></div>
<div class="f" style="left:840px;top:956px;width:80px"><div class="v" style="color:#3ad63a">vid-gpu</div></div>
<div class="t" style="right:714px;top:957px;color:#f4f4f4;text-align:right;">video out</div>
<div class="p" style="left:919px;top:960px"></div>
<div style="position:absolute;left:674px;top:976px;width:68px;height:52px"><svg width="68" height="52" viewBox="0 0 68 52">
<path d="M2 1 Q34 -1 66 1 Q68 26 66 51 Q34 53 2 51 Q0 26 2 1z" fill="#0c1a24"/>
<rect x="4" y="4" width="60" height="44" fill="#3c7aa6"/>
<rect x="30" y="22" width="32" height="24" fill="#24506a"/>
<rect x="32" y="24" width="28" height="20" fill="#6a9373"/>
<rect x="18" y="14" width="32" height="24" fill="#24506a"/>
<rect x="20" y="16" width="28" height="20" fill="#97a949"/>
<rect x="30" y="22" width="20" height="16" fill="#3a6a5a"/>
<rect x="32" y="24" width="16" height="12" fill="#a8b040"/>
<rect x="6" y="6" width="32" height="24" fill="#03141a"/>
<rect x="8" y="8" width="28" height="20" fill="#cdcc2a"/>
</svg></div>
<div class="t" style="left:1019px;top:929px;color:#a2a2a6;">Motion Blur</div>
<div style="position:absolute;left:1016px;top:952px;width:436px;height:102px;background:#4f4f59;"></div>
<div style="position:absolute;left:1094px;top:974px;width:107px;height:2px;background:#000;"></div>
<div class="f" style="left:1014px;top:956px;width:80px"><div class="v" style="color:#3ad63a">vid-gpu</div></div>
<div class="t" style="left:1097px;top:957px;color:#f4f4f4;">video in</div>
<div class="p" style="left:1004px;top:960px"></div>
<div style="position:absolute;left:1094px;top:998px;width:107px;height:2px;background:#000;"></div>
<div class="f" style="left:1014px;top:980px;width:80px"><div class="v" style="color:#3ad63a">15</div></div>
<div class="t" style="left:1097px;top:981px;color:#f4f4f4;">accum amt</div>
<div class="p" style="left:1004px;top:984px"></div>
<div style="position:absolute;left:1094px;top:1022px;width:107px;height:2px;background:#000;"></div>
<div class="f" style="left:1014px;top:1004px;width:80px"><div class="v" style="color:#3ad63a">7.5</div></div>
<div class="t" style="left:1097px;top:1005px;color:#f4f4f4;">decay amt</div>
<div class="p" style="left:1004px;top:1008px"></div>
<div style="position:absolute;left:1094px;top:1046px;width:107px;height:2px;background:#000;"></div>
<div class="f" style="left:1014px;top:1028px;width:80px"><div class="v" style="color:#3ad63a">off</div></div>
<div class="t" style="left:1097px;top:1029px;color:#f4f4f4;">bypass</div>
<div class="p" style="left:1004px;top:1032px"></div>
<div style="position:absolute;left:1282px;top:974px;width:92px;height:2px;background:#000;"></div>
<div class="f" style="left:1374px;top:956px;width:80px"><div class="v" style="color:#3ad63a">vid-gpu</div></div>
<div class="t" style="right:180px;top:957px;color:#f4f4f4;text-align:right;">video out</div>
<div class="p" style="left:1453px;top:960px"></div>
<div style="position:absolute;left:1208px;top:976px;width:68px;height:52px"><svg width="68" height="52" viewBox="0 0 68 52">
<path d="M2 1 Q34 -1 66 1 Q68 26 66 51 Q34 53 2 51 Q0 26 2 1z" fill="#0c1a24"/>
<rect x="4" y="4" width="60" height="44" fill="#3c7aa6"/>
<defs><linearGradient id="mbg" x1="0" x2="1"><stop offset="0" stop-color="#fff" stop-opacity="0.9"/><stop offset="1" stop-color="#fff" stop-opacity="0"/></linearGradient>
<linearGradient id="mbk" x1="0" x2="1"><stop offset="0" stop-color="#000" stop-opacity="1"/><stop offset="1" stop-color="#000" stop-opacity="0"/></linearGradient>
<linearGradient id="mbs" x1="0" x2="0" y1="0" y2="1"><stop offset="0" stop-color="#102030" stop-opacity="0.7"/><stop offset="1" stop-color="#102030" stop-opacity="0"/></linearGradient></defs>
<rect x="6" y="38" width="34" height="8" fill="url(#mbs)"/>
<rect x="36" y="16" width="28" height="2" fill="url(#mbg)"/>
<rect x="36" y="18" width="28" height="2" fill="url(#mbk)"/>
<rect x="36" y="20" width="28" height="2" fill="url(#mbg)"/>
<rect x="36" y="22" width="28" height="2" fill="url(#mbk)"/>
<rect x="36" y="24" width="28" height="6" fill="url(#mbg)"/>
<rect x="36" y="30" width="28" height="2" fill="url(#mbk)"/>
<rect x="36" y="32" width="28" height="2" fill="url(#mbg)"/>
<rect x="6" y="12" width="34" height="26" fill="#100c04"/>
<rect x="10" y="16" width="26" height="18" fill="#fff"/>
</svg></div>
<div style="position:absolute;left:688px;top:396px;width:68px;height:52px"><svg width="68" height="52" viewBox="0 0 68 52">
<path d="M2 1 Q34 -1 66 1 Q68 26 66 51 Q34 53 2 51 Q0 26 2 1z" fill="#0c1a24"/>
<rect x="4" y="4" width="60" height="44" fill="#3c7aa6"/>
<rect x="12" y="6" width="32" height="24" fill="#2c3e50"/>
<rect x="14" y="8" width="28" height="20" fill="#1fbb22"/>
<rect x="24" y="14" width="32" height="24" fill="#2c3e50"/>
<rect x="26" y="16" width="28" height="20" fill="#1fbb22"/>
<rect x="24" y="14" width="20" height="16" fill="#03141a"/>
<rect x="26" y="16" width="16" height="12" fill="#a8a234"/>
</svg></div>
<svg style="position:absolute;left:0;top:0" width="1550" height="1200" shape-rendering="crispEdges"><path d="M486 52h4v2h-4zM486 54h4v2h-4zM486 56h4v2h-4zM486 58h4v2h-4zM486 60h4v2h-4zM486 62h4v2h-4zM486 64h4v2h-4zM486 66h4v2h-4zM486 68h4v2h-4zM486 70h4v2h-4zM486 72h6v2h-6zM488 74h4v2h-4zM488 76h4v2h-4zM488 78h4v2h-4zM488 80h4v2h-4zM488 82h4v2h-4zM488 84h4v2h-4zM488 86h4v2h-4zM488 88h4v2h-4zM488 90h4v2h-4zM488 92h4v2h-4zM488 94h4v2h-4zM488 96h4v2h-4zM488 98h4v2h-4zM488 100h4v2h-4zM488 102h4v2h-4zM488 104h4v2h-4zM488 106h4v2h-4zM488 108h6v2h-6zM490 110h4v2h-4zM490 112h4v2h-4zM490 114h4v2h-4zM490 116h4v2h-4zM490 118h4v2h-4zM490 120h4v2h-4zM490 122h4v2h-4zM490 124h4v2h-4zM490 126h4v2h-4zM490 128h4v2h-4zM490 130h4v2h-4zM490 132h4v2h-4zM490 134h4v2h-4zM490 136h4v2h-4zM490 138h4v2h-4zM490 140h4v2h-4zM490 142h4v2h-4zM490 144h4v2h-4zM490 146h6v2h-6zM492 148h4v2h-4zM492 150h4v2h-4zM492 152h4v2h-4zM492 154h4v2h-4zM492 156h4v2h-4zM492 158h4v2h-4zM492 160h4v2h-4zM492 162h4v2h-4zM492 164h4v2h-4zM492 166h4v2h-4zM492 168h4v2h-4zM492 170h4v2h-4zM492 172h4v2h-4zM492 174h4v2h-4zM492 176h4v2h-4zM492 178h4v2h-4zM492 180h4v2h-4zM492 182h6v2h-6zM494 184h4v2h-4zM494 186h4v2h-4zM494 188h4v2h-4zM494 190h4v2h-4zM494 192h4v2h-4zM494 194h4v2h-4zM494 196h4v2h-4zM494 198h4v2h-4zM494 200h4v2h-4zM494 202h4v2h-4zM494 204h4v2h-4zM494 206h4v2h-4zM494 208h4v2h-4zM494 210h4v2h-4zM494 212h4v2h-4zM494 214h4v2h-4zM494 216h4v2h-4zM494 218h6v2h-6zM496 220h4v2h-4zM496 222h4v2h-4zM496 224h4v2h-4zM496 226h4v2h-4zM496 228h4v2h-4zM496 230h4v2h-4zM496 232h4v2h-4zM496 234h4v2h-4zM496 236h4v2h-4zM496 238h4v2h-4zM496 240h4v2h-4zM496 242h4v2h-4zM496 244h4v2h-4zM496 246h4v2h-4zM496 248h4v2h-4zM496 250h4v2h-4zM496 252h4v2h-4zM496 254h4v2h-4zM496 256h6v2h-6zM498 258h4v2h-4zM498 260h4v2h-4zM498 262h4v2h-4zM498 264h4v2h-4zM498 266h4v2h-4zM498 268h4v2h-4zM498 270h4v2h-4zM498 272h4v2h-4zM498 274h4v2h-4zM498 276h4v2h-4zM498 278h4v2h-4zM498 280h4v2h-4zM498 282h4v2h-4zM498 284h4v2h-4zM498 286h4v2h-4zM498 288h4v2h-4zM498 290h4v2h-4zM498 292h6v2h-6zM500 294h4v2h-4zM500 296h4v2h-4zM500 298h4v2h-4zM500 300h4v2h-4zM500 302h4v2h-4zM500 304h4v2h-4zM500 306h4v2h-4zM500 308h4v2h-4zM500 310h4v2h-4zM500 312h4v2h-4zM500 314h4v2h-4zM500 316h4v2h-4zM500 318h4v2h-4zM500 320h4v2h-4zM500 322h4v2h-4zM500 324h4v2h-4zM500 326h4v2h-4zM500 328h4v2h-4zM500 330h6v2h-6zM502 332h4v2h-4zM502 334h4v2h-4zM502 336h4v2h-4zM502 338h4v2h-4zM502 340h4v2h-4zM502 342h4v2h-4zM502 344h4v2h-4zM502 346h4v2h-4zM502 348h4v2h-4zM502 350h4v2h-4zM502 352h4v2h-4zM502 354h4v2h-4zM502 356h4v2h-4zM502 358h4v2h-4zM502 360h4v2h-4zM502 362h4v2h-4zM502 364h4v2h-4zM502 366h6v2h-6zM504 368h4v2h-4zM504 370h4v2h-4zM504 372h4v2h-4zM504 374h4v2h-4zM504 376h4v2h-4zM504 378h4v2h-4zM504 380h4v2h-4zM504 382h4v2h-4zM504 384h4v2h-4zM504 386h4v2h-4z" fill="#33873a"/><path d="M92 196h4v2h-4zM92 198h6v2h-6zM94 200h8v2h-8zM96 202h8v2h-8zM100 204h6v2h-6zM102 206h6v2h-6zM104 208h8v2h-8zM106 210h8v2h-8zM110 212h6v2h-6zM112 214h6v2h-6zM114 216h8v2h-8zM116 218h8v2h-8zM120 220h6v2h-6zM122 222h6v2h-6zM124 224h8v2h-8zM126 226h8v2h-8zM130 228h6v2h-6zM132 230h8v2h-8zM134 232h8v2h-8zM138 234h6v2h-6zM140 236h6v2h-6zM142 238h8v2h-8zM144 240h8v2h-8zM148 242h6v2h-6zM150 244h6v2h-6zM152 246h8v2h-8zM154 248h8v2h-8zM158 250h6v2h-6zM160 252h6v2h-6zM162 254h8v2h-8zM164 256h8v2h-8zM168 258h6v2h-6zM170 260h6v2h-6zM172 262h8v2h-8zM174 264h8v2h-8zM178 266h6v2h-6zM180 268h6v2h-6zM182 270h8v2h-8zM184 272h8v2h-8zM188 274h6v2h-6zM190 276h6v2h-6zM192 278h8v2h-8zM194 280h8v2h-8zM198 282h6v2h-6zM200 284h6v2h-6zM202 286h8v2h-8zM204 288h8v2h-8zM208 290h6v2h-6zM210 292h6v2h-6zM212 294h8v2h-8zM214 296h8v2h-8zM218 298h6v2h-6zM220 300h8v2h-8zM222 302h8v2h-8zM226 304h6v2h-6zM228 306h6v2h-6zM230 308h8v2h-8zM232 310h8v2h-8zM236 312h6v2h-6zM238 314h6v2h-6zM240 316h8v2h-8zM242 318h8v2h-8zM246 320h6v2h-6zM248 322h6v2h-6zM250 324h8v2h-8zM252 326h8v2h-8zM256 328h6v2h-6zM258 330h6v2h-6zM260 332h8v2h-8zM262 334h8v2h-8zM266 336h6v2h-6zM268 338h6v2h-6zM270 340h8v2h-8zM272 342h8v2h-8zM276 344h6v2h-6zM278 346h6v2h-6zM280 348h8v2h-8zM282 350h8v2h-8zM286 352h6v2h-6zM288 354h6v2h-6zM290 356h8v2h-8zM292 358h8v2h-8zM296 360h6v2h-6zM298 362h8v2h-8zM300 364h8v2h-8zM304 366h6v2h-6zM306 368h6v2h-6zM308 370h8v2h-8zM310 372h8v2h-8zM314 374h6v2h-6zM316 376h6v2h-6zM318 378h8v2h-8zM320 380h8v2h-8zM324 382h6v2h-6zM326 384h6v2h-6zM328 386h8v2h-8zM330 388h8v2h-8zM334 390h6v2h-6zM336 392h6v2h-6zM338 394h8v2h-8zM340 396h8v2h-8zM344 398h6v2h-6zM346 400h6v2h-6zM348 402h8v2h-8zM350 404h8v2h-8zM354 406h6v2h-6zM356 408h6v2h-6zM358 410h8v2h-8zM360 412h8v2h-8zM364 414h6v2h-6zM366 416h6v2h-6zM368 418h8v2h-8zM370 420h8v2h-8zM374 422h6v2h-6zM376 424h6v2h-6zM378 426h8v2h-8zM380 428h8v2h-8zM384 430h6v2h-6zM386 432h8v2h-8zM388 434h8v2h-8zM392 436h6v2h-6zM394 438h6v2h-6zM396 440h8v2h-8zM398 442h8v2h-8zM402 444h6v2h-6zM404 446h6v2h-6zM406 448h8v2h-8zM408 450h8v2h-8zM412 452h6v2h-6zM414 454h6v2h-6zM416 456h8v2h-8zM418 458h8v2h-8zM422 460h6v2h-6zM424 462h6v2h-6zM426 464h8v2h-8zM428 466h8v2h-8zM432 468h6v2h-6zM434 470h6v2h-6zM436 472h8v2h-8zM438 474h8v2h-8zM442 476h6v2h-6zM444 478h6v2h-6zM446 480h8v2h-8zM448 482h8v2h-8zM452 484h6v2h-6zM454 486h6v2h-6zM456 488h8v2h-8zM458 490h8v2h-8zM462 492h6v2h-6zM464 494h8v2h-8zM466 496h8v2h-8zM470 498h6v2h-6zM472 500h6v2h-6zM474 502h8v2h-8zM476 504h8v2h-8zM480 506h6v2h-6zM482 508h6v2h-6zM484 510h8v2h-8zM486 512h8v2h-8zM490 514h6v2h-6zM492 516h6v2h-6zM494 518h8v2h-8zM496 520h8v2h-8zM500 522h6v2h-6zM502 524h6v2h-6zM504 526h8v2h-8zM506 528h8v2h-8zM510 530h6v2h-6zM512 532h6v2h-6zM514 534h8v2h-8zM516 536h8v2h-8zM520 538h6v2h-6zM522 540h6v2h-6zM524 542h8v2h-8zM526 544h8v2h-8zM530 546h6v2h-6zM532 548h6v2h-6zM534 550h8v2h-8zM536 552h8v2h-8zM540 554h6v2h-6zM542 556h6v2h-6zM544 558h8v2h-8zM546 560h8v2h-8zM550 562h6v2h-6zM552 564h8v2h-8zM554 566h8v2h-8zM558 568h6v2h-6zM560 570h6v2h-6zM562 572h8v2h-8zM564 574h8v2h-8zM568 576h6v2h-6zM570 578h6v2h-6zM572 580h8v2h-8zM574 582h8v2h-8zM578 584h6v2h-6zM580 586h6v2h-6zM582 588h8v2h-8zM584 590h8v2h-8zM588 592h6v2h-6zM590 594h4v2h-4z" fill="#a83434"/><path d="M18 592h6v2h-6zM18 594h10v2h-10zM22 596h10v2h-10zM26 598h10v2h-10zM30 600h12v2h-12zM34 602h12v2h-12zM40 604h10v2h-10zM44 606h10v2h-10zM48 608h12v2h-12zM52 610h12v2h-12zM58 612h10v2h-10zM62 614h10v2h-10zM66 616h12v2h-12zM70 618h12v2h-12zM76 620h10v2h-10zM80 622h10v2h-10zM84 624h10v2h-10zM88 626h12v2h-12zM92 628h12v2h-12zM98 630h10v2h-10zM102 632h10v2h-10zM106 634h12v2h-12zM110 636h12v2h-12zM116 638h10v2h-10zM120 640h10v2h-10zM124 642h12v2h-12zM128 644h12v2h-12zM134 646h10v2h-10zM138 648h10v2h-10zM142 650h12v2h-12zM146 652h12v2h-12zM152 654h10v2h-10zM156 656h10v2h-10zM160 658h12v2h-12zM164 660h12v2h-12zM170 662h10v2h-10zM174 664h10v2h-10zM178 666h12v2h-12zM182 668h12v2h-12zM188 670h10v2h-10zM192 672h10v2h-10zM196 674h12v2h-12zM200 676h12v2h-12zM206 678h10v2h-10zM210 680h10v2h-10zM214 682h10v2h-10zM218 684h12v2h-12zM222 686h12v2h-12zM228 688h10v2h-10zM232 690h10v2h-10zM236 692h12v2h-12zM240 694h12v2h-12zM246 696h10v2h-10zM250 698h10v2h-10zM254 700h12v2h-12zM258 702h12v2h-12zM264 704h10v2h-10zM268 706h10v2h-10zM272 708h12v2h-12zM276 710h12v2h-12zM282 712h10v2h-10zM286 714h10v2h-10zM290 716h12v2h-12zM294 718h12v2h-12zM300 720h10v2h-10zM304 722h10v2h-10zM308 724h12v2h-12zM312 726h12v2h-12zM318 728h10v2h-10zM322 730h10v2h-10zM326 732h10v2h-10zM330 734h12v2h-12zM334 736h12v2h-12zM340 738h10v2h-10zM344 740h10v2h-10zM348 742h12v2h-12zM352 744h12v2h-12zM358 746h10v2h-10zM362 748h10v2h-10zM366 750h12v2h-12zM370 752h12v2h-12zM376 754h10v2h-10zM380 756h10v2h-10zM384 758h12v2h-12zM388 760h12v2h-12zM394 762h10v2h-10zM398 764h10v2h-10zM402 766h12v2h-12zM406 768h12v2h-12zM412 770h10v2h-10zM416 772h10v2h-10zM420 774h12v2h-12zM424 776h12v2h-12zM430 778h10v2h-10zM434 780h10v2h-10zM438 782h12v2h-12zM442 784h12v2h-12zM448 786h10v2h-10zM452 788h10v2h-10zM456 790h10v2h-10zM460 792h12v2h-12zM464 794h12v2h-12zM470 796h10v2h-10zM474 798h10v2h-10zM478 800h12v2h-12zM482 802h12v2h-12zM488 804h10v2h-10zM492 806h10v2h-10zM496 808h12v2h-12zM500 810h12v2h-12zM506 812h10v2h-10zM510 814h10v2h-10zM514 816h10v2h-10zM518 818h6v2h-6z" fill="#a83434"/><path d="M936 384h4v2h-4zM934 386h6v2h-6zM932 388h6v2h-6zM930 390h6v2h-6zM928 392h6v2h-6zM926 394h6v2h-6zM924 396h6v2h-6zM922 398h6v2h-6zM920 400h6v2h-6zM918 402h6v2h-6zM916 404h6v2h-6zM914 406h6v2h-6zM912 408h6v2h-6zM910 410h6v2h-6zM908 412h6v2h-6zM906 414h6v2h-6zM904 416h6v2h-6zM902 418h6v2h-6zM900 420h6v2h-6zM898 422h6v2h-6zM896 424h6v2h-6zM894 426h6v2h-6zM892 428h6v2h-6zM890 430h6v2h-6zM888 432h6v2h-6zM886 434h6v2h-6zM884 436h6v2h-6zM882 438h6v2h-6zM880 440h6v2h-6zM878 442h6v2h-6zM876 444h6v2h-6zM874 446h6v2h-6zM874 448h4v2h-4zM872 450h6v2h-6zM870 452h6v2h-6zM868 454h6v2h-6zM866 456h6v2h-6zM864 458h6v2h-6zM862 460h6v2h-6zM860 462h6v2h-6zM858 464h6v2h-6zM856 466h6v2h-6zM854 468h6v2h-6zM852 470h6v2h-6zM850 472h6v2h-6zM848 474h6v2h-6zM846 476h6v2h-6zM844 478h6v2h-6zM842 480h6v2h-6zM840 482h6v2h-6zM838 484h6v2h-6zM836 486h6v2h-6zM834 488h6v2h-6zM832 490h6v2h-6zM830 492h6v2h-6zM828 494h6v2h-6zM826 496h6v2h-6zM824 498h6v2h-6zM822 500h6v2h-6zM820 502h6v2h-6zM818 504h6v2h-6zM816 506h6v2h-6zM814 508h6v2h-6zM812 510h6v2h-6zM810 512h6v2h-6zM808 514h6v2h-6zM806 516h6v2h-6zM804 518h6v2h-6zM802 520h6v2h-6zM800 522h6v2h-6zM798 524h6v2h-6zM796 526h6v2h-6zM794 528h6v2h-6zM792 530h6v2h-6zM790 532h6v2h-6zM788 534h6v2h-6zM786 536h6v2h-6zM784 538h6v2h-6zM782 540h6v2h-6zM780 542h6v2h-6zM778 544h6v2h-6zM776 546h6v2h-6zM774 548h6v2h-6zM772 550h6v2h-6zM770 552h6v2h-6zM768 554h6v2h-6zM766 556h6v2h-6zM764 558h6v2h-6zM762 560h6v2h-6zM760 562h6v2h-6zM758 564h6v2h-6zM756 566h6v2h-6zM754 568h6v2h-6zM752 570h6v2h-6zM750 572h6v2h-6zM748 574h6v2h-6zM748 576h4v2h-4zM746 578h6v2h-6zM744 580h6v2h-6zM742 582h6v2h-6zM740 584h6v2h-6zM738 586h6v2h-6zM736 588h6v2h-6zM734 590h6v2h-6zM732 592h6v2h-6zM730 594h6v2h-6zM728 596h6v2h-6zM726 598h6v2h-6zM724 600h6v2h-6zM722 602h6v2h-6zM720 604h6v2h-6zM718 606h6v2h-6zM716 608h6v2h-6zM714 610h6v2h-6zM712 612h6v2h-6zM710 614h6v2h-6zM708 616h6v2h-6zM706 618h6v2h-6zM704 620h6v2h-6zM702 622h6v2h-6zM700 624h6v2h-6zM698 626h6v2h-6zM696 628h6v2h-6zM694 630h6v2h-6zM692 632h6v2h-6zM690 634h6v2h-6zM688 636h6v2h-6zM686 638h6v2h-6zM686 640h4v2h-4z" fill="#33873a"/><path d="M936 384h4v2h-4zM934 386h6v2h-6zM934 388h4v2h-4zM932 390h6v2h-6zM930 392h6v2h-6zM928 394h6v2h-6zM928 396h4v2h-4zM926 398h6v2h-6zM924 400h6v2h-6zM922 402h6v2h-6zM922 404h4v2h-4zM920 406h6v2h-6zM918 408h6v2h-6zM916 410h6v2h-6zM916 412h4v2h-4zM914 414h6v2h-6zM912 416h6v2h-6zM910 418h6v2h-6zM910 420h4v2h-4zM908 422h6v2h-6zM906 424h6v2h-6zM904 426h6v2h-6zM904 428h4v2h-4zM902 430h6v2h-6zM900 432h6v2h-6zM898 434h6v2h-6zM898 436h4v2h-4zM896 438h6v2h-6zM894 440h6v2h-6zM892 442h6v2h-6zM892 444h4v2h-4zM890 446h6v2h-6zM888 448h6v2h-6zM888 450h4v2h-4zM886 452h6v2h-6zM884 454h6v2h-6zM882 456h6v2h-6zM882 458h4v2h-4zM880 460h6v2h-6zM878 462h6v2h-6zM876 464h6v2h-6zM876 466h4v2h-4zM874 468h6v2h-6zM872 470h6v2h-6zM870 472h6v2h-6zM870 474h4v2h-4zM868 476h6v2h-6zM866 478h6v2h-6zM864 480h6v2h-6zM864 482h4v2h-4zM862 484h6v2h-6zM860 486h6v2h-6zM858 488h6v2h-6zM858 490h4v2h-4zM856 492h6v2h-6zM854 494h6v2h-6zM852 496h6v2h-6zM852 498h4v2h-4zM850 500h6v2h-6zM848 502h6v2h-6zM848 504h4v2h-4zM846 506h6v2h-6zM844 508h6v2h-6zM842 510h6v2h-6zM842 512h4v2h-4zM840 514h6v2h-6zM838 516h6v2h-6zM836 518h6v2h-6zM836 520h4v2h-4zM834 522h6v2h-6zM832 524h6v2h-6zM830 526h6v2h-6zM830 528h4v2h-4zM828 530h6v2h-6zM826 532h6v2h-6zM824 534h6v2h-6zM824 536h4v2h-4zM822 538h6v2h-6zM820 540h6v2h-6zM818 542h6v2h-6zM818 544h4v2h-4zM816 546h6v2h-6zM814 548h6v2h-6zM812 550h6v2h-6zM812 552h4v2h-4zM810 554h6v2h-6zM808 556h6v2h-6zM806 558h6v2h-6zM806 560h4v2h-4zM804 562h6v2h-6zM802 564h6v2h-6zM802 566h4v2h-4zM800 568h6v2h-6zM798 570h6v2h-6zM796 572h6v2h-6zM796 574h4v2h-4zM794 576h6v2h-6zM792 578h6v2h-6zM790 580h6v2h-6zM790 582h4v2h-4zM788 584h6v2h-6zM786 586h6v2h-6zM784 588h6v2h-6zM784 590h4v2h-4zM782 592h6v2h-6zM780 594h6v2h-6zM778 596h6v2h-6zM778 598h4v2h-4zM776 600h6v2h-6zM774 602h6v2h-6zM772 604h6v2h-6zM772 606h4v2h-4zM770 608h6v2h-6zM768 610h6v2h-6zM766 612h6v2h-6zM766 614h4v2h-4zM764 616h6v2h-6zM762 618h6v2h-6zM762 620h4v2h-4zM760 622h6v2h-6zM758 624h6v2h-6zM756 626h6v2h-6zM756 628h4v2h-4zM754 630h6v2h-6zM752 632h6v2h-6zM750 634h6v2h-6zM750 636h4v2h-4zM748 638h6v2h-6zM746 640h6v2h-6zM744 642h6v2h-6zM744 644h4v2h-4zM742 646h6v2h-6zM740 648h6v2h-6zM738 650h6v2h-6zM738 652h4v2h-4zM736 654h6v2h-6zM734 656h6v2h-6zM732 658h6v2h-6zM732 660h4v2h-4zM730 662h6v2h-6zM728 664h6v2h-6zM726 666h6v2h-6zM726 668h4v2h-4zM724 670h6v2h-6zM722 672h6v2h-6zM720 674h6v2h-6zM720 676h4v2h-4zM718 678h6v2h-6zM716 680h6v2h-6zM716 682h4v2h-4zM714 684h6v2h-6zM712 686h6v2h-6zM710 688h6v2h-6zM710 690h4v2h-4zM708 692h6v2h-6zM706 694h6v2h-6zM704 696h6v2h-6zM704 698h4v2h-4zM702 700h6v2h-6zM700 702h6v2h-6zM698 704h6v2h-6zM698 706h4v2h-4zM696 708h6v2h-6zM694 710h6v2h-6zM692 712h6v2h-6zM692 714h4v2h-4zM690 716h6v2h-6zM688 718h6v2h-6zM686 720h6v2h-6zM686 722h4v2h-4zM684 724h6v2h-6zM682 726h6v2h-6zM680 728h6v2h-6zM680 730h4v2h-4zM678 732h6v2h-6zM676 734h6v2h-6zM676 736h4v2h-4zM674 738h6v2h-6zM672 740h6v2h-6zM670 742h6v2h-6zM670 744h4v2h-4zM668 746h6v2h-6zM666 748h6v2h-6zM664 750h6v2h-6zM664 752h4v2h-4zM662 754h6v2h-6zM660 756h6v2h-6zM658 758h6v2h-6zM658 760h4v2h-4zM656 762h6v2h-6zM654 764h6v2h-6zM652 766h6v2h-6zM652 768h4v2h-4zM650 770h6v2h-6zM648 772h6v2h-6zM646 774h6v2h-6zM646 776h4v2h-4zM644 778h6v2h-6zM642 780h6v2h-6zM640 782h6v2h-6zM640 784h4v2h-4zM638 786h6v2h-6zM636 788h6v2h-6zM634 790h6v2h-6zM634 792h4v2h-4zM632 794h6v2h-6zM630 796h6v2h-6zM630 798h4v2h-4zM628 800h6v2h-6zM626 802h6v2h-6zM624 804h6v2h-6zM624 806h4v2h-4zM622 808h6v2h-6zM620 810h6v2h-6zM618 812h6v2h-6zM618 814h4v2h-4zM616 816h6v2h-6zM614 818h6v2h-6zM612 820h6v2h-6zM612 822h4v2h-4zM610 824h6v2h-6zM608 826h6v2h-6zM606 828h6v2h-6zM606 830h4v2h-4zM604 832h6v2h-6zM602 834h6v2h-6zM600 836h6v2h-6zM600 838h4v2h-4zM598 840h6v2h-6zM596 842h6v2h-6zM594 844h6v2h-6zM594 846h4v2h-4zM592 848h6v2h-6zM590 850h6v2h-6zM590 852h4v2h-4zM588 854h6v2h-6zM586 856h6v2h-6zM584 858h6v2h-6zM584 860h4v2h-4zM582 862h6v2h-6zM580 864h6v2h-6zM578 866h6v2h-6zM578 868h4v2h-4zM576 870h6v2h-6zM574 872h6v2h-6zM572 874h6v2h-6zM572 876h4v2h-4zM570 878h6v2h-6zM568 880h6v2h-6zM566 882h6v2h-6zM566 884h4v2h-4zM564 886h6v2h-6zM562 888h6v2h-6zM560 890h6v2h-6zM560 892h4v2h-4zM558 894h6v2h-6zM556 896h6v2h-6zM554 898h6v2h-6zM554 900h4v2h-4zM552 902h6v2h-6zM550 904h6v2h-6zM548 906h6v2h-6zM548 908h4v2h-4zM546 910h6v2h-6zM544 912h6v2h-6zM544 914h4v2h-4zM542 916h6v2h-6zM540 918h6v2h-6zM538 920h6v2h-6zM538 922h4v2h-4zM536 924h6v2h-6zM534 926h6v2h-6zM532 928h6v2h-6zM532 930h4v2h-4zM530 932h6v2h-6zM528 934h6v2h-6zM526 936h6v2h-6zM526 938h4v2h-4zM524 940h6v2h-6zM522 942h6v2h-6zM520 944h6v2h-6zM520 946h4v2h-4zM518 948h6v2h-6zM516 950h6v2h-6zM514 952h6v2h-6zM514 954h4v2h-4zM512 956h6v2h-6zM510 958h6v2h-6zM508 960h6v2h-6zM508 962h4v2h-4zM506 964h6v2h-6zM506 966h4v2h-4z" fill="#33873a"/><path d="M1072 110h4v2h-4zM1072 112h4v2h-4zM1072 114h4v2h-4zM1072 116h4v2h-4zM1072 118h6v2h-6zM1074 120h4v2h-4zM1074 122h4v2h-4zM1074 124h4v2h-4zM1074 126h4v2h-4zM1074 128h4v2h-4zM1074 130h4v2h-4zM1074 132h4v2h-4zM1074 134h6v2h-6zM1076 136h4v2h-4zM1076 138h4v2h-4zM1076 140h4v2h-4zM1076 142h4v2h-4zM1076 144h4v2h-4zM1076 146h4v2h-4zM1076 148h6v2h-6zM1078 150h4v2h-4zM1078 152h4v2h-4zM1078 154h4v2h-4zM1078 156h4v2h-4zM1078 158h4v2h-4zM1078 160h4v2h-4zM1078 162h6v2h-6zM1080 164h4v2h-4zM1080 166h4v2h-4zM1080 168h4v2h-4zM1080 170h4v2h-4zM1080 172h4v2h-4zM1080 174h4v2h-4zM1080 176h4v2h-4zM1080 178h6v2h-6zM1082 180h4v2h-4zM1082 182h4v2h-4zM1082 184h4v2h-4zM1082 186h4v2h-4zM1082 188h4v2h-4zM1082 190h4v2h-4zM1082 192h6v2h-6zM1084 194h4v2h-4zM1084 196h4v2h-4zM1084 198h4v2h-4zM1084 200h4v2h-4zM1084 202h4v2h-4zM1084 204h4v2h-4zM1084 206h6v2h-6zM1086 208h4v2h-4zM1086 210h4v2h-4zM1086 212h4v2h-4zM1086 214h4v2h-4zM1086 216h4v2h-4zM1086 218h4v2h-4zM1086 220h4v2h-4zM1086 222h6v2h-6zM1088 224h4v2h-4zM1088 226h4v2h-4zM1088 228h4v2h-4zM1088 230h4v2h-4zM1088 232h4v2h-4zM1088 234h4v2h-4zM1088 236h6v2h-6zM1090 238h4v2h-4zM1090 240h4v2h-4zM1090 242h4v2h-4zM1090 244h4v2h-4zM1090 246h4v2h-4zM1090 248h4v2h-4zM1090 250h6v2h-6zM1092 252h4v2h-4zM1092 254h4v2h-4zM1092 256h4v2h-4zM1092 258h4v2h-4zM1092 260h4v2h-4zM1092 262h4v2h-4zM1092 264h4v2h-4zM1092 266h6v2h-6zM1094 268h4v2h-4zM1094 270h4v2h-4zM1094 272h4v2h-4zM1094 274h4v2h-4zM1094 276h4v2h-4zM1094 278h4v2h-4zM1094 280h6v2h-6zM1096 282h4v2h-4zM1096 284h4v2h-4zM1096 286h4v2h-4zM1096 288h4v2h-4zM1096 290h4v2h-4zM1096 292h4v2h-4zM1096 294h6v2h-6zM1098 296h4v2h-4zM1098 298h4v2h-4zM1098 300h4v2h-4zM1098 302h4v2h-4zM1098 304h4v2h-4zM1098 306h4v2h-4zM1098 308h4v2h-4zM1098 310h6v2h-6zM1100 312h4v2h-4zM1100 314h4v2h-4zM1100 316h4v2h-4zM1100 318h4v2h-4zM1100 320h4v2h-4zM1100 322h4v2h-4zM1100 324h6v2h-6zM1102 326h4v2h-4zM1102 328h4v2h-4zM1102 330h4v2h-4zM1102 332h4v2h-4zM1102 334h4v2h-4zM1102 336h4v2h-4zM1102 338h6v2h-6zM1104 340h4v2h-4zM1104 342h4v2h-4zM1104 344h4v2h-4zM1104 346h4v2h-4zM1104 348h4v2h-4zM1104 350h4v2h-4zM1104 352h4v2h-4zM1104 354h6v2h-6zM1106 356h4v2h-4zM1106 358h4v2h-4zM1106 360h4v2h-4zM1106 362h4v2h-4zM1106 364h4v2h-4zM1106 366h4v2h-4zM1106 368h6v2h-6zM1108 370h4v2h-4zM1108 372h4v2h-4zM1108 374h4v2h-4zM1108 376h4v2h-4zM1108 378h4v2h-4zM1108 380h4v2h-4zM1108 382h6v2h-6zM1110 384h4v2h-4zM1110 386h4v2h-4zM1110 388h4v2h-4zM1110 390h4v2h-4zM1110 392h4v2h-4zM1110 394h4v2h-4zM1110 396h4v2h-4zM1110 398h6v2h-6zM1112 400h4v2h-4zM1112 402h4v2h-4zM1112 404h4v2h-4zM1112 406h4v2h-4zM1112 408h4v2h-4zM1112 410h4v2h-4zM1112 412h6v2h-6zM1114 414h4v2h-4zM1114 416h4v2h-4zM1114 418h4v2h-4zM1114 420h4v2h-4zM1114 422h4v2h-4zM1114 424h4v2h-4zM1114 426h6v2h-6zM1116 428h4v2h-4zM1116 430h4v2h-4zM1116 432h4v2h-4zM1116 434h4v2h-4zM1116 436h4v2h-4zM1116 438h4v2h-4zM1116 440h4v2h-4zM1116 442h6v2h-6zM1118 444h4v2h-4zM1118 446h4v2h-4zM1118 448h4v2h-4zM1118 450h4v2h-4zM1118 452h4v2h-4zM1118 454h4v2h-4zM1118 456h6v2h-6zM1120 458h4v2h-4zM1120 460h4v2h-4zM1120 462h4v2h-4zM1120 464h4v2h-4zM1120 466h4v2h-4zM1120 468h4v2h-4zM1120 470h6v2h-6zM1122 472h4v2h-4zM1122 474h4v2h-4zM1122 476h4v2h-4zM1122 478h4v2h-4zM1122 480h4v2h-4zM1122 482h4v2h-4zM1122 484h4v2h-4zM1122 486h6v2h-6zM1124 488h4v2h-4zM1124 490h4v2h-4zM1124 492h4v2h-4zM1124 494h4v2h-4zM1124 496h4v2h-4zM1124 498h4v2h-4zM1124 500h6v2h-6zM1126 502h4v2h-4zM1126 504h4v2h-4zM1126 506h4v2h-4zM1126 508h4v2h-4zM1126 510h4v2h-4zM1126 512h4v2h-4zM1126 514h6v2h-6zM1128 516h4v2h-4zM1128 518h4v2h-4zM1128 520h4v2h-4zM1128 522h4v2h-4zM1128 524h4v2h-4zM1128 526h4v2h-4zM1128 528h4v2h-4zM1128 530h6v2h-6zM1130 532h4v2h-4zM1130 534h4v2h-4zM1130 536h4v2h-4zM1130 538h4v2h-4zM1130 540h4v2h-4zM1130 542h4v2h-4zM1130 544h6v2h-6zM1132 546h4v2h-4zM1132 548h4v2h-4zM1132 550h4v2h-4zM1132 552h4v2h-4zM1132 554h4v2h-4zM1132 556h4v2h-4zM1132 558h6v2h-6zM1134 560h4v2h-4zM1134 562h4v2h-4zM1134 564h4v2h-4zM1134 566h4v2h-4zM1134 568h4v2h-4zM1134 570h4v2h-4zM1134 572h4v2h-4zM1134 574h6v2h-6zM1136 576h4v2h-4zM1136 578h4v2h-4zM1136 580h4v2h-4zM1136 582h4v2h-4zM1136 584h4v2h-4zM1136 586h4v2h-4zM1136 588h6v2h-6zM1138 590h4v2h-4zM1138 592h4v2h-4zM1138 594h4v2h-4zM1138 596h4v2h-4zM1138 598h4v2h-4zM1138 600h4v2h-4zM1138 602h6v2h-6zM1140 604h4v2h-4zM1140 606h4v2h-4zM1140 608h4v2h-4zM1140 610h4v2h-4zM1140 612h4v2h-4zM1140 614h4v2h-4zM1140 616h4v2h-4zM1140 618h6v2h-6zM1142 620h4v2h-4zM1142 622h4v2h-4zM1142 624h4v2h-4zM1142 626h4v2h-4zM1142 628h4v2h-4zM1142 630h4v2h-4zM1142 632h6v2h-6zM1144 634h4v2h-4zM1144 636h4v2h-4zM1144 638h4v2h-4zM1144 640h4v2h-4z" fill="#33873a"/><path d="M922 964h90v2h-90zM922 966h90v2h-90z" fill="#33873a"/><path d="M1244 520h4v2h-4zM1244 522h4v2h-4zM1244 524h6v2h-6zM1246 526h4v2h-4zM1246 528h6v2h-6zM1248 530h4v2h-4zM1248 532h6v2h-6zM1250 534h4v2h-4zM1250 536h6v2h-6zM1252 538h4v2h-4zM1252 540h6v2h-6zM1254 542h4v2h-4zM1254 544h6v2h-6zM1256 546h4v2h-4zM1256 548h6v2h-6zM1258 550h4v2h-4zM1258 552h6v2h-6zM1260 554h4v2h-4zM1260 556h6v2h-6zM1262 558h4v2h-4zM1262 560h6v2h-6zM1264 562h4v2h-4zM1264 564h6v2h-6zM1266 566h4v2h-4zM1266 568h4v2h-4zM1266 570h6v2h-6zM1268 572h4v2h-4zM1268 574h6v2h-6zM1270 576h4v2h-4zM1270 578h6v2h-6zM1272 580h4v2h-4zM1272 582h6v2h-6zM1274 584h4v2h-4zM1274 586h6v2h-6zM1276 588h4v2h-4zM1276 590h6v2h-6zM1278 592h4v2h-4zM1278 594h6v2h-6zM1280 596h4v2h-4zM1280 598h6v2h-6zM1282 600h4v2h-4zM1282 602h6v2h-6zM1284 604h4v2h-4zM1284 606h6v2h-6zM1286 608h4v2h-4zM1286 610h4v2h-4zM1286 612h6v2h-6zM1288 614h4v2h-4zM1288 616h6v2h-6zM1290 618h4v2h-4zM1290 620h6v2h-6zM1292 622h4v2h-4zM1292 624h6v2h-6zM1294 626h4v2h-4zM1294 628h6v2h-6zM1296 630h4v2h-4zM1296 632h6v2h-6zM1298 634h4v2h-4zM1298 636h6v2h-6zM1300 638h4v2h-4zM1300 640h6v2h-6zM1302 642h4v2h-4zM1302 644h6v2h-6zM1304 646h4v2h-4zM1304 648h6v2h-6zM1306 650h4v2h-4zM1306 652h6v2h-6zM1308 654h4v2h-4zM1308 656h4v2h-4zM1308 658h6v2h-6zM1310 660h4v2h-4zM1310 662h6v2h-6zM1312 664h4v2h-4zM1312 666h6v2h-6zM1314 668h4v2h-4zM1314 670h6v2h-6zM1316 672h4v2h-4zM1316 674h6v2h-6zM1318 676h4v2h-4zM1318 678h6v2h-6zM1320 680h4v2h-4zM1320 682h6v2h-6zM1322 684h4v2h-4zM1322 686h6v2h-6zM1324 688h4v2h-4zM1324 690h6v2h-6zM1326 692h4v2h-4zM1326 694h6v2h-6zM1328 696h4v2h-4zM1328 698h4v2h-4zM1328 700h6v2h-6zM1330 702h4v2h-4zM1330 704h6v2h-6zM1332 706h4v2h-4zM1332 708h6v2h-6zM1334 710h4v2h-4zM1334 712h6v2h-6zM1336 714h4v2h-4zM1336 716h6v2h-6zM1338 718h4v2h-4zM1338 720h6v2h-6zM1340 722h4v2h-4zM1340 724h6v2h-6zM1342 726h4v2h-4zM1342 728h6v2h-6zM1344 730h4v2h-4zM1344 732h6v2h-6zM1346 734h4v2h-4zM1346 736h6v2h-6zM1348 738h4v2h-4zM1348 740h6v2h-6zM1350 742h4v2h-4zM1350 744h4v2h-4zM1350 746h6v2h-6zM1352 748h4v2h-4zM1352 750h6v2h-6zM1354 752h4v2h-4zM1354 754h6v2h-6zM1356 756h4v2h-4zM1356 758h6v2h-6zM1358 760h4v2h-4zM1358 762h6v2h-6zM1360 764h4v2h-4zM1360 766h6v2h-6zM1362 768h4v2h-4zM1362 770h6v2h-6zM1364 772h4v2h-4zM1364 774h6v2h-6zM1366 776h4v2h-4zM1366 778h6v2h-6zM1368 780h4v2h-4zM1368 782h6v2h-6zM1370 784h4v2h-4zM1370 786h6v2h-6zM1372 788h4v2h-4zM1372 790h4v2h-4zM1372 792h6v2h-6zM1374 794h4v2h-4zM1374 796h6v2h-6zM1376 798h4v2h-4zM1376 800h6v2h-6zM1378 802h4v2h-4zM1378 804h6v2h-6zM1380 806h4v2h-4zM1380 808h6v2h-6zM1382 810h4v2h-4zM1382 812h6v2h-6zM1384 814h4v2h-4zM1384 816h6v2h-6zM1386 818h4v2h-4zM1386 820h6v2h-6zM1388 822h4v2h-4zM1388 824h6v2h-6zM1390 826h4v2h-4zM1390 828h6v2h-6zM1392 830h4v2h-4zM1392 832h4v2h-4zM1392 834h6v2h-6zM1394 836h4v2h-4zM1394 838h6v2h-6zM1396 840h4v2h-4zM1396 842h6v2h-6zM1398 844h4v2h-4zM1398 846h6v2h-6zM1400 848h4v2h-4zM1400 850h6v2h-6zM1402 852h4v2h-4zM1402 854h6v2h-6zM1404 856h4v2h-4zM1404 858h6v2h-6zM1406 860h4v2h-4zM1406 862h6v2h-6zM1408 864h4v2h-4zM1408 866h6v2h-6zM1410 868h4v2h-4zM1410 870h6v2h-6zM1412 872h4v2h-4zM1412 874h6v2h-6zM1414 876h4v2h-4zM1414 878h4v2h-4zM1414 880h6v2h-6zM1416 882h4v2h-4zM1416 884h6v2h-6zM1418 886h4v2h-4zM1418 888h6v2h-6zM1420 890h4v2h-4zM1420 892h6v2h-6zM1422 894h4v2h-4zM1422 896h6v2h-6zM1424 898h4v2h-4zM1424 900h6v2h-6zM1426 902h4v2h-4zM1426 904h6v2h-6zM1428 906h4v2h-4zM1428 908h6v2h-6zM1430 910h4v2h-4zM1430 912h6v2h-6zM1432 914h4v2h-4zM1432 916h6v2h-6zM1434 918h4v2h-4zM1434 920h4v2h-4zM1434 922h6v2h-6zM1436 924h4v2h-4zM1436 926h6v2h-6zM1438 928h4v2h-4zM1438 930h6v2h-6zM1440 932h4v2h-4zM1440 934h6v2h-6zM1442 936h4v2h-4zM1442 938h6v2h-6zM1444 940h4v2h-4zM1444 942h6v2h-6zM1446 944h4v2h-4zM1446 946h6v2h-6zM1448 948h4v2h-4zM1448 950h6v2h-6zM1450 952h4v2h-4zM1450 954h6v2h-6zM1452 956h4v2h-4zM1452 958h6v2h-6zM1454 960h4v2h-4zM1454 962h6v2h-6zM1456 964h4v2h-4zM1456 966h4v2h-4z" fill="#33873a"/></svg>
<div style="position:absolute;left:106px;top:334px;width:372px;height:30px;background:#000;"></div>
<div style="position:absolute;left:108px;top:336px;width:370px;height:28px;background:#00a000;"></div>
<div style="position:absolute;left:108px;top:336px;width:368px;height:26px;background:#006400;"></div>
<div style="position:absolute;left:152px;top:336px;width:28px;height:26px;background:#00b400;"></div>
<div style="position:absolute;left:168px;top:336px;width:2px;height:26px;background:#ffff00;"></div>
<div style="position:absolute;left:200px;top:584px;width:200px;height:108px;background:#8a8a8a;"></div>
<div style="position:absolute;left:200px;top:584px;width:198px;height:106px;background:#000;"></div>
<div style="position:absolute;left:202px;top:586px;width:196px;height:104px;background:#505050;"></div>
<svg style="position:absolute;left:0;top:0" width="1550" height="1200" shape-rendering="crispEdges"><path d="M204 686h4v2h-4zM208 684h4v2h-4zM212 682h4v2h-4zM216 680h4v2h-4zM220 678h4v2h-4zM224 676h4v2h-4zM228 674h4v2h-4zM232 672h4v2h-4zM236 670h4v2h-4zM240 668h4v2h-4zM244 666h4v2h-4zM248 664h4v2h-4zM252 662h4v2h-4zM256 660h4v2h-4zM260 658h4v2h-4zM264 656h4v2h-4zM268 654h4v2h-4zM272 652h4v2h-4zM276 650h4v2h-4zM280 648h4v2h-4zM284 646h4v2h-4zM288 644h4v2h-4zM292 642h4v2h-4zM296 640h4v2h-4zM300 638h4v2h-4zM304 636h4v2h-4zM308 634h4v2h-4zM312 632h4v2h-4zM316 630h4v2h-4zM320 628h4v2h-4zM324 626h4v2h-4zM328 624h4v2h-4zM332 622h4v2h-4zM336 620h4v2h-4zM340 618h4v2h-4zM344 616h4v2h-4zM348 614h4v2h-4zM352 612h4v2h-4zM356 610h4v2h-4zM360 608h4v2h-4zM364 606h4v2h-4zM368 604h4v2h-4zM372 602h4v2h-4zM376 600h4v2h-4zM380 598h4v2h-4zM384 596h4v2h-4zM388 594h4v2h-4zM392 592h4v2h-4zM396 590h4v2h-4z" fill="#8c8c8c"/></svg>
<div class="f" style="left:1250px;top:512px;width:80px"><div class="v" style="color:#3ad63a">vid-gpu</div></div>
<div class="f" style="left:692px;top:630px;width:80px"><div class="v" style="color:#3ad63a">vid-gpu</div></div>
<div class="f" style="left:854px;top:376px;width:80px"><div class="v" style="color:#3ad63a">vid-gpu</div></div>
</body></html>
